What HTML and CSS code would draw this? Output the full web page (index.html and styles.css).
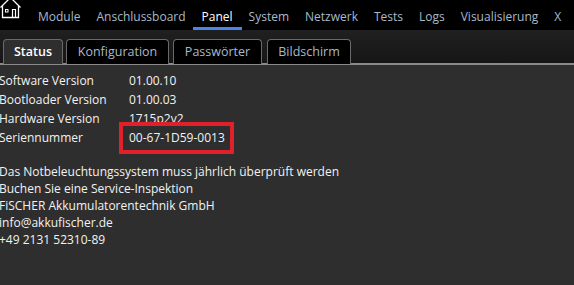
FILE: index.html
```html
<!DOCTYPE html>
<html lang="de">
<head>
    <meta charset="UTF-8">
    <title>Panel - Status</title>
    <link rel="stylesheet" href="styles.css">
</head>
<body>
    <nav class="topbar">
        <a href="#" class="home">
            <svg width="22" height="22" viewBox="0 0 22 22">
                <path d="M0.5 9.5 L10.5 -0.5 L20.5 9.5 M2.5 7.5 V19.5 H18.5 V7.5" fill="none" stroke="#fff" stroke-width="1.3"/>
                <rect x="5.5" y="11.5" width="2.5" height="2.5" fill="none" stroke="#fff" stroke-width="1"/>
                <path d="M12.5 19.5 V11.5 H15.5 V19.5" fill="none" stroke="#fff" stroke-width="1.2"/>
            </svg>
        </a>
        <ul class="menu">
            <li><a href="#">Module</a></li>
            <li><a href="#">Anschlussboard</a></li>
            <li class="active"><a href="#">Panel</a></li>
            <li><a href="#">System</a></li>
            <li><a href="#">Netzwerk</a></li>
            <li><a href="#">Tests</a></li>
            <li><a href="#">Logs</a></li>
            <li><a href="#">Visualisierung</a></li>
            <li><a href="#">X</a></li>
        </ul>
    </nav>

    <div class="tabbar">
        <a href="#" class="tab active">Status</a>
        <a href="#" class="tab">Konfiguration</a>
        <a href="#" class="tab">Passwörter</a>
        <a href="#" class="tab">Bildschirm</a>
    </div>

    <main class="content">
        <div class="info">
            <span>Software Version</span><span>01.00.10</span>
            <span>Bootloader Version</span><span>01.00.03</span>
            <span>Hardware Version</span><span>1715p2v2</span>
            <span>Seriennummer</span><span class="mark">00-67-1D59-0013</span>
        </div>

        <div class="notice">
            <p>Das Notbeleuchtungssystem muss jährlich überprüft werden</p>
            <p>Buchen Sie eine Service-Inspektion</p>
            <p>FiSCHER Akkumulatorentechnik GmbH</p>
            <p>info@akkufischer.de</p>
            <p>+49 2131 52310-89</p>
        </div>
    </main>
</body>
</html>
```

FILE: styles.css
```css
* {
    margin: 0;
    padding: 0;
    box-sizing: border-box;
}

body {
    background: #2e2e2e;
    color: #f2f2f2;
    font-family: 'Open Sans', 'Noto Sans', sans-serif;
    font-size: 12px;
    overflow: hidden;
}

a {
    text-decoration: none;
    color: inherit;
}

.topbar {
    background: #000;
    height: 30px;
    display: flex;
    align-items: flex-start;
}

.home {
    width: 38px;
    height: 30px;
    display: block;
    flex-shrink: 0;
    margin-top: -2px;
}

.menu {
    list-style: none;
    display: flex;
    gap: 16px;
    height: 30px;
    white-space: nowrap;
}

.menu li {
    padding-top: 8px;
    height: 30px;
    border-bottom: 3px solid transparent;
}

.menu a {
    color: #a9b9c9;
    font-size: 12px;
    line-height: 18px;
}

.menu li.active {
    border-bottom-color: #4a86e8;
    margin: 0 -9px;
    padding: 8px 9px 0;
}

.menu li.active a {
    color: #fff;
}

.tabbar {
    height: 35px;
    background: linear-gradient(#202020, #161616);
    border-bottom: 2px solid #8a8a8a;
    display: flex;
    align-items: flex-end;
    gap: 3px;
    padding-left: 3px;
}

.tab {
    height: 25px;
    margin-bottom: -1px;
    background: #000;
    border: 1px solid #6a6a6a;
    border-bottom: none;
    border-radius: 4px 4px 0 0;
    color: #a9b9c9;
    font-size: 12.5px;
    line-height: 23px;
    text-align: center;
    white-space: nowrap;
}

.tab:nth-child(2) { width: 103px; }
.tab:nth-child(3) { width: 89px; margin-left: 1px; }
.tab:nth-child(4) { width: 84px; margin-left: 2px; }

.tab.active {
    background: #2e2e2e;
    color: #fff;
    font-weight: 600;
    width: 60px;
}

.content {
    padding-top: 6px;
    margin-left: -1px;
}

.info {
    display: grid;
    grid-template-columns: 130px auto;
    grid-auto-rows: 19px;
    line-height: 19px;
}

.mark {
    justify-self: start;
    border: 4px solid #e0202a;
    margin: -6px 0 -7px -10px;
    padding: 0 5px 0 6px;
    line-height: 24px;
    white-space: nowrap;
}

.notice {
    margin-top: 16px;
    line-height: 17px;
}
```
